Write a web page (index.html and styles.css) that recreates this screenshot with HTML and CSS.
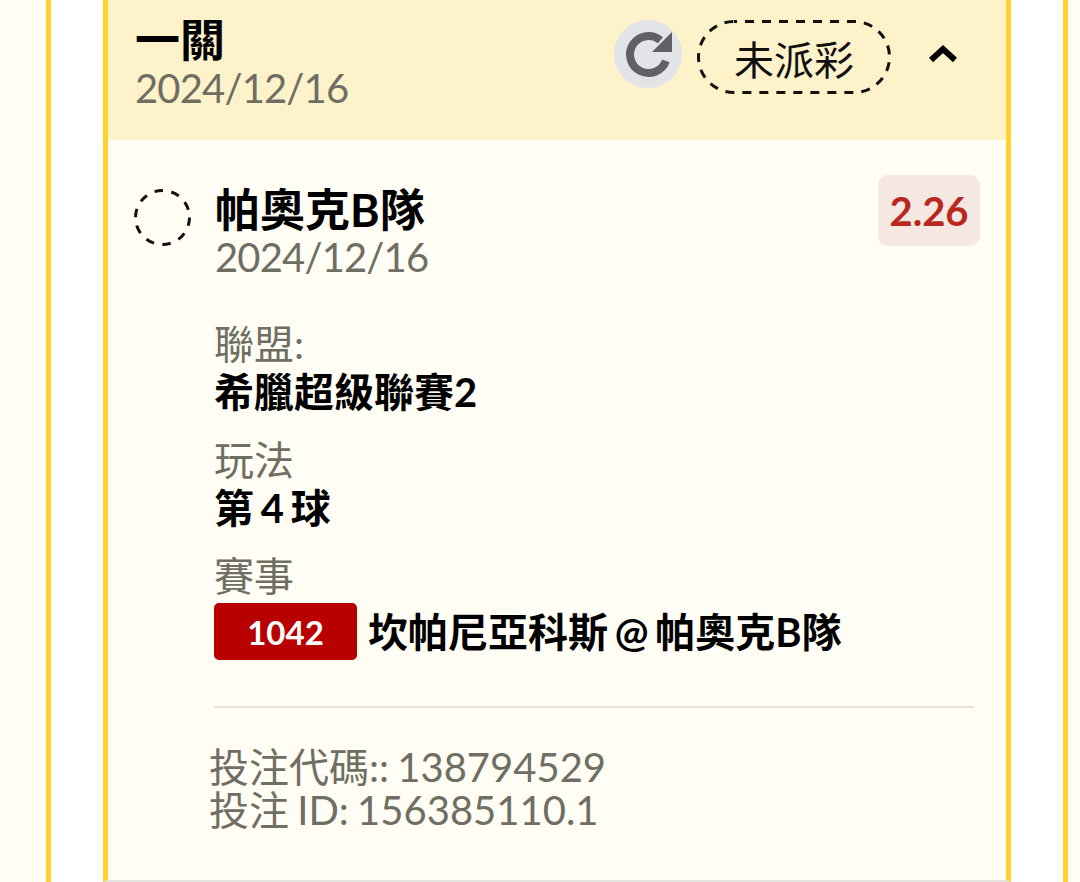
FILE: index.html
```html
<!DOCTYPE html>
<html>
<head>
    <title>Bet Detail</title>
    <link rel="stylesheet" href="styles.css">
</head>
<body>
    <div class="outer">
        <div class="bet-card">
            <div class="bet-header">
                <div class="bet-title">
                    <div class="bet-type">一關</div>
                    <div class="bet-date">2024/12/16</div>
                </div>
                <div class="refresh-button">
                    <svg width="68" height="68" viewBox="0 0 68 68">
                        <path d="M46.4 20.3 A18.5 18.5 0 1 0 51.9 40.8" fill="none" stroke="#5f6166" stroke-width="8"/>
                        <polygon points="58,12 58,32 38,32" fill="#5f6166"/>
                    </svg>
                </div>
                <div class="status-pill">
                    <svg class="pill-outline" width="194" height="74" viewBox="0 0 194 74">
                        <rect x="1.5" y="1.5" width="191" height="71" rx="35.5" fill="none" stroke="#111" stroke-width="3" stroke-dasharray="9 8" stroke-dashoffset="6"/>
                    </svg>
                    未派彩
                </div>
                <svg class="chevron" width="28" height="19" viewBox="0 0 28 19">
                    <path d="M2 16 L14 5 L26 16" fill="none" stroke="#000" stroke-width="6"/>
                </svg>
            </div>
            <div class="bet-body">
                <div class="pick-row">
                    <svg class="pick-circle" width="57" height="57" viewBox="0 0 57 57">
                        <circle cx="28.5" cy="28.5" r="27" fill="none" stroke="#111" stroke-width="3" stroke-dasharray="8.5 8.46"/>
                    </svg>
                    <div class="pick-info">
                        <div class="pick-name">帕奧克B隊</div>
                        <div class="pick-date">2024/12/16</div>
                    </div>
                    <div class="odds">2.26</div>
                </div>
                <div class="details">
                    <div class="detail">
                        <div class="detail-label">聯盟:</div>
                        <div class="detail-value">希臘超級聯賽2</div>
                    </div>
                    <div class="detail">
                        <div class="detail-label">玩法</div>
                        <div class="detail-value">第 4 球</div>
                    </div>
                    <div class="detail">
                        <div class="detail-label">賽事</div>
                        <div class="match-row">
                            <span class="match-code">1042</span>
                            <span class="detail-value">坎帕尼亞科斯 @ 帕奧克B隊</span>
                        </div>
                    </div>
                    <div class="divider"></div>
                </div>
                <div class="bet-ids">
                    <div>投注代碼:: 138794529</div>
                    <div>投注 ID: 156385110.1</div>
                </div>
            </div>
        </div>
    </div>
</body>
</html>
```

FILE: styles.css
```css
html, body {
    height: 100%;
}

body {
    margin: 0;
    padding: 0 12px 0 46px;
    box-sizing: border-box;
    background-color: #fffdf4;
    font-family: "Lato", "Noto Sans CJK TC", sans-serif;
    font-size: 40px;
    overflow: hidden;
}

.outer {
    height: 882px;
    box-sizing: border-box;
    padding: 0 52px;
    background-color: #fff;
    border-left: 5px solid #fdd32c;
    border-right: 5px solid #fdd32c;
}

.bet-card {
    height: 882px;
    box-sizing: border-box;
    background-color: #fffdf4;
    border-left: 5px solid #fdd32c;
    border-right: 5px solid #fdd32c;
    border-bottom: 2px solid #e4e3de;
}

/* Header */
.bet-header {
    display: flex;
    align-items: flex-start;
    height: 140px;
    padding: 20px 49px 0 27px;
    box-sizing: border-box;
    background-color: #fef2cb;
}

.bet-title {
    flex: 1;
    margin-top: -3px;
}

.bet-type {
    font-size: 45px;
    font-weight: bold;
    line-height: 46px;
    color: #000;
}

.bet-date {
    line-height: 50px;
    letter-spacing: -0.85px;
    color: #6f6e63;
}

.refresh-button {
    width: 68px;
    height: 68px;
    border-radius: 50%;
    background-color: #e2e4e8;
}

.status-pill {
    position: relative;
    width: 194px;
    height: 74px;
    margin-left: 15px;
    text-align: center;
    line-height: 80px;
    color: #111;
}

.pill-outline {
    position: absolute;
    top: 0;
    left: 0;
}

.chevron {
    margin: 24px 0 0 38px;
}

/* Body */
.bet-body {
    padding: 35px 26px 0 26px;
}

.pick-row {
    display: flex;
    align-items: flex-start;
}

.pick-circle {
    margin-top: 14px;
}

.pick-info {
    flex: 1;
    margin-left: 24px;
    padding-top: 7px;
}

.pick-name {
    font-size: 45px;
    font-weight: bold;
    line-height: 56px;
    color: #000;
}

.pick-date {
    line-height: 39px;
    letter-spacing: -0.85px;
    color: #6f6e63;
}

.odds {
    width: 102px;
    height: 71px;
    border-radius: 10px;
    background-color: #f5e8e2;
    color: #b9271e;
    font-weight: bold;
    text-align: center;
    line-height: 72px;
}

.details {
    margin: 43px 6px 0 80px;
}

.detail {
    margin-bottom: 21px;
}

.detail-label {
    line-height: 49px;
    color: #6f6e63;
}

.detail-value {
    font-weight: bold;
    line-height: 46px;
    word-spacing: -3px;
    color: #000;
}

.match-row {
    display: flex;
    align-items: center;
    gap: 11px;
    margin-top: 2px;
}

.match-code {
    width: 143px;
    height: 57px;
    border-radius: 5px;
    background-color: #b80000;
    color: #fff;
    font-size: 33px;
    font-weight: bold;
    text-align: center;
    line-height: 58px;
}

.divider {
    height: 2px;
    margin-top: 46px;
    background-color: #e4e3de;
}

.bet-ids {
    margin: 38px 0 0 75px;
    line-height: 43px;
    word-spacing: -2px;
    color: #6f6e63;
}
```
